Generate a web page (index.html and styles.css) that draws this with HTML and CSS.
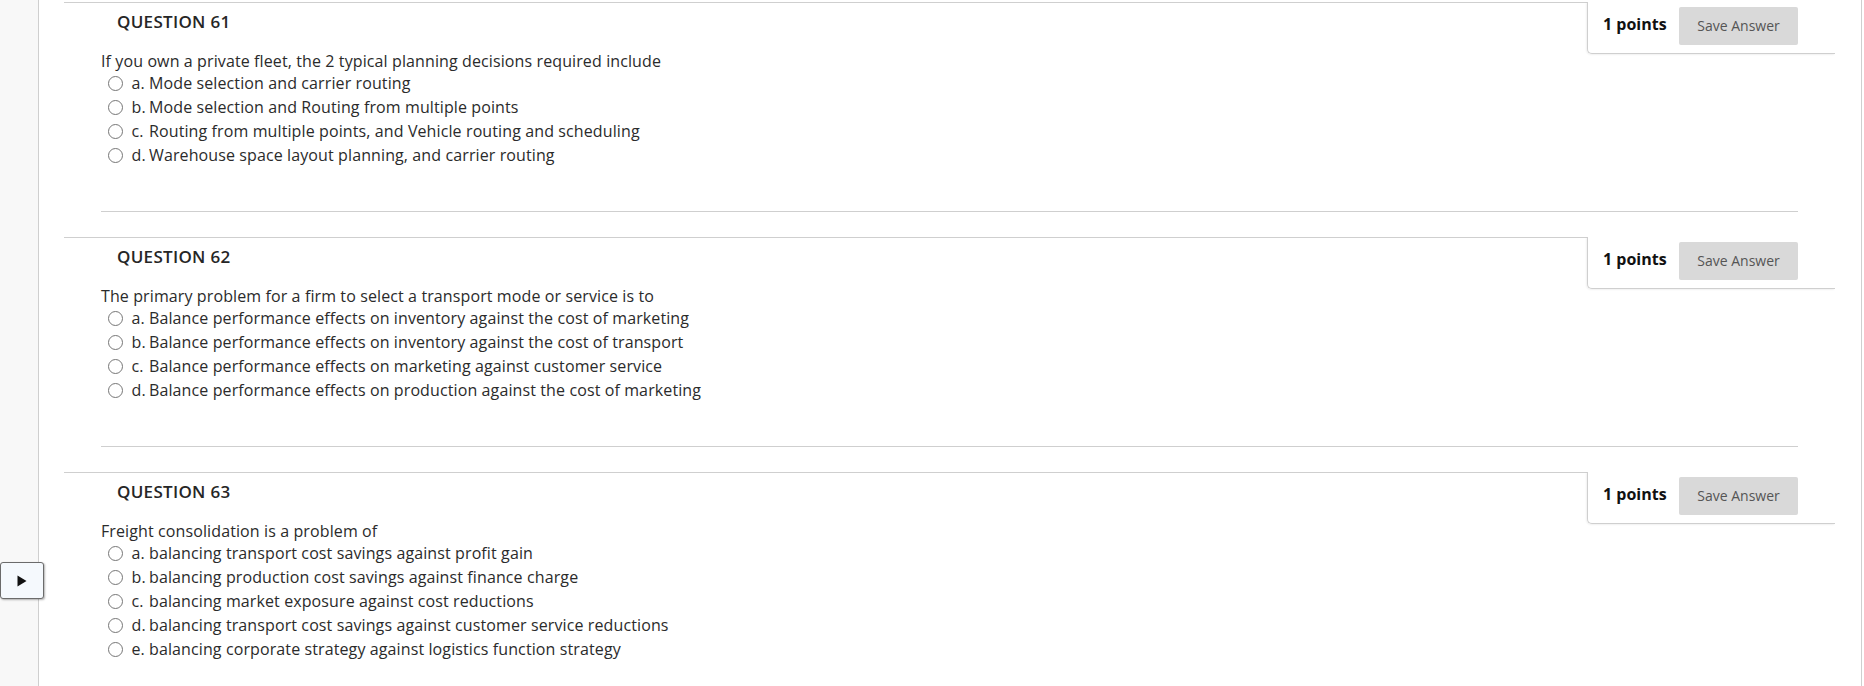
FILE: index.html
```html
<!DOCTYPE html>
<html lang="en">
<head>
<meta charset="utf-8">
<title>Questions</title>
<link rel="stylesheet" href="styles.css">
</head>
<body>
<div class="page">
  <aside class="gutter"></aside>
  <main class="content">
    <section class="question">
      <div class="points-box"><span class="points">1 points</span><button class="save">Save Answer</button></div>
      <h3 class="title">QUESTION 61</h3>
      <div class="body">
        <p class="stem">If you own a private fleet, the 2 typical planning decisions required include</p>
        <label class="option"><input type="radio" name="q61"><span class="key">a.</span>Mode selection and carrier routing</label>
        <label class="option"><input type="radio" name="q61"><span class="key">b.</span>Mode selection and Routing from multiple points</label>
        <label class="option"><input type="radio" name="q61"><span class="key">c.</span>Routing from multiple points, and Vehicle routing and scheduling</label>
        <label class="option"><input type="radio" name="q61"><span class="key">d.</span>Warehouse space layout planning, and carrier routing</label>
      </div>
      <hr class="rule">
    </section>
    <section class="question">
      <div class="points-box"><span class="points">1 points</span><button class="save">Save Answer</button></div>
      <h3 class="title">QUESTION 62</h3>
      <div class="body">
        <p class="stem">The primary problem for a firm to select a transport mode or service is to</p>
        <label class="option"><input type="radio" name="q62"><span class="key">a.</span>Balance performance effects on inventory against the cost of marketing</label>
        <label class="option"><input type="radio" name="q62"><span class="key">b.</span>Balance performance effects on inventory against the cost of transport</label>
        <label class="option"><input type="radio" name="q62"><span class="key">c.</span>Balance performance effects on marketing against customer service</label>
        <label class="option"><input type="radio" name="q62"><span class="key">d.</span>Balance performance effects on production against the cost of marketing</label>
      </div>
      <hr class="rule">
    </section>
    <section class="question">
      <div class="points-box"><span class="points">1 points</span><button class="save">Save Answer</button></div>
      <h3 class="title">QUESTION 63</h3>
      <div class="body">
        <p class="stem">Freight consolidation is a problem of</p>
        <label class="option"><input type="radio" name="q63"><span class="key">a.</span>balancing transport cost savings against profit gain</label>
        <label class="option"><input type="radio" name="q63"><span class="key">b.</span>balancing production cost savings against finance charge</label>
        <label class="option"><input type="radio" name="q63"><span class="key">c.</span>balancing market exposure against cost reductions</label>
        <label class="option"><input type="radio" name="q63"><span class="key">d.</span>balancing transport cost savings against customer service reductions</label>
        <label class="option"><input type="radio" name="q63"><span class="key">e.</span>balancing corporate strategy against logistics function strategy</label>
      </div>
    </section>
  </main>
</div>
<button class="toggle" aria-label="Show navigation"><svg width="10" height="12" viewBox="0 0 10 12"><path d="M0.5 0.5 L9.5 6 L0.5 11.5 Z" fill="#111"/></svg></button>
</body>
</html>
```

FILE: styles.css
```css
* { box-sizing: border-box; }
html, body { margin: 0; height: 686px; overflow: hidden; background: #fff; }
body {
  font-family: "Open Sans", "Liberation Sans", sans-serif;
  font-size: 16px;
  letter-spacing: .11px;
  color: #2b2b2b;
}
.page { display: flex; height: 686px; }
.gutter {
  flex: 0 0 39px;
  background: #f8f8f8;
  border-right: 1px solid #cfcfcf;
}
.content {
  flex: 0 0 1823px;
  padding: 2px 0 0 25px;
  border-right: 1px solid #cfcfcf;
}
.question {
  position: relative;
  width: 1771px;
  height: 235.2px;
  border-top: 1px solid #cfcfcf;
}
.title {
  margin: 0;
  padding: 8px 0 0 53px;
  font-size: 17px;
  line-height: 22px;
  font-weight: 600;
  letter-spacing: .3px;
  color: #262626;
}
.body { padding: 16px 0 0 37px; }
.stem { margin: 0; line-height: 24px; height: 22px; }
.option {
  display: flex;
  align-items: center;
  height: 24px;
  padding-left: 7px;
}
.option input {
  appearance: none;
  width: 15px;
  height: 15px;
  margin: 0 8.5px 0 0;
  flex: none;
  background: #fff;
  border: 1.5px solid #767676;
  border-radius: 50%;
}
.key { display: inline-block; width: 17.5px; }
.rule {
  margin: 0;
  position: absolute;
  left: 37px;
  top: 208px;
  width: 1697px;
  border: 0;
  border-top: 1px solid #cfcfcf;
}
.points-box {
  position: absolute;
  top: -1px;
  right: 0;
  width: 248px;
  height: 52px;
  display: flex;
  padding: 5px 37px 0 15px;
  justify-content: space-between;
  border-left: 1px solid #cfcfcf;
  border-bottom: 1px solid #cfcfcf;
  border-bottom-left-radius: 5px;
  box-shadow: -1px 1px 2px rgba(0,0,0,.06);
  background: #fff;
}
.points {
  font-weight: 700;
  font-size: 16px;
  letter-spacing: 0;
  line-height: 34px;
  color: #111;
}
.save {
  width: 119px;
  height: 38px;
  border: 0;
  border-radius: 2px;
  background: #d9d9d9;
  color: #555;
  font-family: inherit;
  font-size: 14px;
  padding: 0 0 1px;
}
.toggle {
  position: absolute;
  left: 0;
  top: 562px;
  width: 44px;
  height: 37px;
  padding: 0;
  display: flex;
  align-items: center;
  justify-content: center;
  background: #f5f9fd;
  border: 1px solid #6b6b6b;
  border-radius: 3px;
  box-shadow: 1px 1px 2px rgba(0,0,0,.3);
}
```
